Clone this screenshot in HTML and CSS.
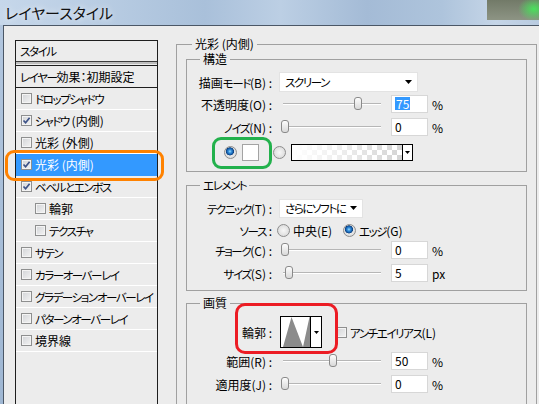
FILE: index.html
```html
<!DOCTYPE html>
<html lang="ja">
<head>
<meta charset="utf-8">
<title>レイヤースタイル</title>
<link rel="stylesheet" href="styles.css">
</head>
<body>
<div class="screen">
  <div class="titlebar"><span class="title">レイヤースタイル</span></div>
  <div class="client">
    <div class="side">
      <div class="side-head"><span class="k">スタイル</span></div>
      <div class="side-sep"></div>
      <div class="side-head2"><span class="k">レイヤー</span>効果：初期設定</div>
      <ul class="fx-list">
        <li class="fx"><span class="cb"></span><span class="k">ドロップシャドウ</span></li>
        <li class="fx"><span class="cb"><svg viewBox="0 0 9 9" width="9" height="9"><polyline points="1.5,4.5 3.6,6.8 7.6,1.8" class="tick"/></svg></span><span class="k">シャドウ</span>&nbsp;(内側)</li>
        <li class="fx"><span class="cb"></span>光彩 (外側)</li>
        <li class="fx sel"><span class="cb"><svg viewBox="0 0 9 9" width="9" height="9"><polyline points="1.5,4.5 3.6,6.8 7.6,1.8" class="tick"/></svg></span>光彩 (内側)</li>
        <li class="fx"><span class="cb"><svg viewBox="0 0 9 9" width="9" height="9"><polyline points="1.5,4.5 3.6,6.8 7.6,1.8" class="tick"/></svg></span><span class="k">ベベルとエンボス</span></li>
        <li class="fx sub"><span class="cb"></span>輪郭</li>
        <li class="fx sub"><span class="cb"></span><span class="k">テクスチャ</span></li>
        <li class="fx"><span class="cb"></span><span class="k">サテン</span></li>
        <li class="fx"><span class="cb"></span><span class="k">カラーオーバーレイ</span></li>
        <li class="fx"><span class="cb"></span><span class="k">グラデーションオーバーレイ</span></li>
        <li class="fx"><span class="cb"></span><span class="k">パターンオーバーレイ</span></li>
        <li class="fx"><span class="cb"></span>境界線</li>
      </ul>
    </div>

    <fieldset class="group outer">
      <legend>光彩 (内側)</legend>

      <fieldset class="group inner g-struct">
        <legend>構造</legend>
        <div class="row">
          <span class="lbl">描画<span class="k">モード</span>(B) :</span>
          <div class="select sel-mode"><span class="sel-text k">スクリーン</span><svg class="arrow" viewBox="0 0 7 4" width="7" height="4"><polygon points="0,0 7,0 3.5,4"/></svg></div>
        </div>
        <div class="row r2">
          <span class="lbl">不透明度(O) :</span>
          <div class="slider"><div class="track"></div><span class="thumb" style="left:73px"></span></div>
          <div class="num"><span class="hl">75</span></div>
          <span class="unit">%</span>
        </div>
        <div class="row r3">
          <span class="lbl"><span class="k">ノイズ</span>(N) :</span>
          <div class="slider"><div class="track"></div><span class="thumb" style="left:0px"></span></div>
          <div class="num">0</div>
          <span class="unit">%</span>
        </div>
        <div class="row r4">
          <span class="radio on"></span>
          <span class="swatch"></span>
          <span class="radio r-grad"></span>
          <div class="grad"><div class="grad-fill"></div><div class="grad-btn"><svg viewBox="0 0 5 3" width="5" height="3"><polygon points="0,0 5,0 2.5,3"/></svg></div></div>
        </div>
      </fieldset>

      <fieldset class="group inner g-elem">
        <legend><span class="k">エレメント</span></legend>
        <div class="row">
          <span class="lbl"><span class="k">テクニック</span>(T) :</span>
          <div class="select sel-tech"><span class="sel-text k">さらにソフトに</span><svg class="arrow" viewBox="0 0 7 4" width="7" height="4"><polygon points="0,0 7,0 3.5,4"/></svg></div>
        </div>
        <div class="row r2">
          <span class="lbl"><span class="k">ソース</span> :</span>
          <span class="radio src1"></span>
          <span class="opt">中央(E)</span>
          <span class="radio on"></span>
          <span class="opt2"><span class="k">エッジ</span>(G)</span>
        </div>
        <div class="row">
          <span class="lbl"><span class="k">チョーク</span>(C) :</span>
          <div class="slider"><div class="track"></div><span class="thumb" style="left:0px"></span></div>
          <div class="num">0</div>
          <span class="unit">%</span>
        </div>
        <div class="row r4e">
          <span class="lbl"><span class="k">サイズ</span>(S) :</span>
          <div class="slider"><div class="track"></div><span class="thumb" style="left:4px"></span></div>
          <div class="num">5</div>
          <span class="unit">px</span>
        </div>
      </fieldset>

      <fieldset class="group inner g-qual">
        <legend>画質</legend>
        <div class="row tall">
          <span class="lbl">輪郭 :</span>
          <div class="contour">
            <div class="contour-pv"><svg viewBox="0 0 29 30" width="29" height="30"><polygon points="2,30 10.5,0 22,30 28.5,0 29,0 29,30" fill="#8b8b8b"/></svg></div>
            <div class="contour-btn"><svg viewBox="0 0 5 3" width="5" height="3"><polygon points="0,0 5,0 2.5,3"/></svg></div>
          </div>
          <span class="cb cb-aa"></span>
          <span class="aa-text"><span class="k">アンチエイリアス</span>(L)</span>
        </div>
        <div class="row r2q">
          <span class="lbl">範囲(R) :</span>
          <div class="slider"><div class="track"></div><span class="thumb" style="left:48px"></span></div>
          <div class="num">50</div>
          <span class="unit">%</span>
        </div>
        <div class="row r2q">
          <span class="lbl">適用度(J) :</span>
          <div class="slider"><div class="track"></div><span class="thumb" style="left:0px"></span></div>
          <div class="num">0</div>
          <span class="unit">%</span>
        </div>
      </fieldset>
    </fieldset>
  </div>

  <div class="anno anno-orange"></div>
  <div class="anno anno-green"></div>
  <div class="anno anno-red"></div>
</div>
</body>
</html>
```

FILE: styles.css
```css
* { box-sizing: border-box; }
html, body { margin: 0; padding: 0; }
body {
  width: 539px;
  height: 404px;
  overflow: hidden;
  background: #a9bfd8;
  font-family: "Noto Sans CJK JP", sans-serif;
  font-size: 12px;
  font-feature-settings: "palt";
  color: #000;
}
.k {
  font-size: 11.5px;
  letter-spacing: -1.4px;
}
.screen {
  position: relative;
  width: 539px;
  height: 404px;
  overflow: hidden;
  background: linear-gradient(#b3c7df, #9fb7d3);
}

/* title bar */
.titlebar {
  height: 25px;
  display: flex;
  align-items: center;
  padding-left: 5px;
  background:
    radial-gradient(ellipse 16px 12px at 534px 9px, rgba(70,230,90,0.95), rgba(70,230,90,0) 100%),
    linear-gradient(#727a68, #8d9484) right top / 52px 20px no-repeat,
    linear-gradient(to right, #c6d7ea 0%, #b9cde3 18%, #a9c0da 38%, #bccfe4 52%, #a4bbd6 68%, #aec4dc 82%, #c5d5e7 92%, #b9cbe0 100%);
}
.title {
  font-size: 15px;
  line-height: 16px;
  color: #111;
  text-shadow: 0 0 6px rgba(255,255,255,0.9);
}

/* client area */
.client {
  margin-left: 3px;
  height: 379px;
  border-top: 1px solid #4b5766;
  border-left: 1px solid #4b5766;
  background: #ececec;
  display: flex;
  align-items: flex-start;
}

/* left list */
.side {
  flex: none;
  margin: 14px 0 0 11px;
  width: 143px;
  height: 400px;
  border: 1px solid #1e1e1e;
}
.side-head {
  height: 20px;
  line-height: 20px;
  padding-left: 4px;
}
.side-sep {
  height: 5px;
  background: linear-gradient(#3c3c3c 0 1px, #bdbdbd 1px 3px, #ececec 3px 4px, #1e1e1e 4px 5px);
}
.side-head2 {
  height: 22px;
  line-height: 21px;
  padding-left: 4px;
  border-bottom: 1px solid #1e1e1e;
  white-space: nowrap;
}
.fx-list {
  list-style: none;
  margin: 0;
  padding: 0;
}
.fx {
  height: 22px;
  border-bottom: 1px solid #ffffff;
  display: flex;
  align-items: center;
  padding-left: 5px;
  white-space: nowrap;
}
.fx.sub { padding-left: 19px; }
.fx.sel {
  background: #3399ff;
  color: #fff;
  border-bottom-color: #3399ff;
}

/* checkbox */
.cb {
  flex: none;
  width: 11px;
  height: 11px;
  margin-right: 3px;
  border: 1px solid #8e8f8f;
  background: linear-gradient(135deg, #d2d4d7, #f3f3f3);
  box-shadow: inset 0 0 0 1px #f4f4f4;
  display: flex;
  align-items: center;
  justify-content: center;
}
.cb svg { display: block; }
.tick {
  fill: none;
  stroke: #3d5287;
  stroke-width: 1.7;
}

/* group boxes */
fieldset.group {
  min-width: 0;
  border: 1px solid #a0a0a0;
}
fieldset.group > legend {
  padding: 0 3px;
  height: 14px;
  line-height: 14px;
  white-space: nowrap;
}
fieldset.outer {
  flex: none;
  margin: 11px 0 0 18px;
  width: 361px;
  height: 420px;
  padding: 1px 9px 0 9px;
}
fieldset.outer > legend { margin-left: 6px; }
fieldset.inner {
  margin: 0;
  width: 341px;
  padding: 6px 0 0 0;
}
fieldset.inner > legend { margin-left: 13px; }
fieldset.g-struct { padding-bottom: 9px; }
fieldset.g-elem { margin-top: 6px; padding-bottom: 7px; }
fieldset.g-qual { margin-top: 5px; height: 120px; }

/* rows */
.row {
  display: flex;
  align-items: center;
  height: 20px;
  white-space: nowrap;
}
.g-struct .r2 { margin-top: 2px; }
.g-struct .r3 { margin-top: 3px; }
.g-struct .r4 { margin-top: 5px; }
.g-elem .r2 { margin-top: 2px; }
.g-elem .r4e { margin-top: 3px; }
.row.tall { height: 32px; }
.r2q { margin-top: 3px; }

.lbl {
  flex: none;
  width: 87px;
  text-align: right;
  padding-right: 2px;
}

/* dropdown */
.select {
  flex: none;
  margin-left: 5px;
  display: flex;
  align-items: center;
  justify-content: space-between;
  background: #fff;
  border: 1px solid #e3e3e3;
  padding: 0 5px 0 5px;
}
.sel-mode { width: 139px; height: 20px; }
.sel-tech { width: 84px; height: 19px; }
.arrow { display: block; flex: none; fill: #000; }

/* slider */
.slider {
  flex: none;
  position: relative;
  width: 100px;
  height: 20px;
  margin-left: 7px;
  display: flex;
  align-items: center;
}
.track {
  margin-left: 2px;
  width: 98px;
  height: 2px;
  background: linear-gradient(#b6b6b6 0 1px, #ffffff 1px 2px);
}
.thumb {
  position: absolute;
  top: 3px;
  width: 8px;
  height: 13px;
  border: 1px solid #8a8a8a;
  border-radius: 3px;
  background: linear-gradient(#fdfdfd, #d9d9d9);
}

/* number fields */
.num {
  flex: none;
  margin-left: 10px;
  width: 37px;
  height: 18px;
  background: #fff;
  border: 1px solid #d7d7d7;
  padding-left: 3px;
  line-height: 16px;
}
.hl {
  display: inline-block;
  background: #3399ff;
  color: #fff;
  line-height: 13px;
  padding: 0 1px;
}
.unit { margin-left: 4px; }

/* radio */
.radio {
  flex: none;
  width: 13px;
  height: 13px;
  border-radius: 50%;
  border: 1px solid #8d8d8d;
  background: radial-gradient(circle at 50% 50%, #f7f7f7 0, #e2e2e2 60%, #cfcfcf 100%);
}
.radio.on {
  background:
    radial-gradient(circle at 45% 40%, #9fe0ff 0, #3a94dd 1.5px, #155fae 3px, #0c3f7c 3.8px, rgba(12,63,124,0) 4.3px),
    radial-gradient(circle at 50% 50%, #f7f7f7 0, #e2e2e2 60%, #cfcfcf 100%);
}
.g-struct .r4 .radio.on { margin-left: 37px; }
.swatch {
  flex: none;
  margin-left: 5px;
  width: 17px;
  height: 17px;
  border: 1px solid #a3a3a3;
  background: #fff;
}
.r-grad { margin-left: 14px; }
.grad {
  flex: none;
  margin-left: 5px;
  width: 122px;
  height: 17px;
  border: 1px solid #000;
  display: flex;
}
.grad-fill {
  flex: 1;
  background:
    linear-gradient(to right, #ffffff 0%, rgba(255,255,255,0.6) 45%, rgba(255,255,255,0) 100%),
    repeating-conic-gradient(#d4d4d4 0 25%, #ffffff 0 50%) 0 0 / 10px 10px;
}
.grad-btn {
  flex: none;
  width: 10px;
  border-left: 1px solid #000;
  background: #fff;
  display: flex;
  align-items: center;
  justify-content: center;
}
.grad-btn svg, .contour-btn svg { display: block; fill: #000; }

.src1 { margin-left: 3px; }
.opt { flex: none; width: 53px; padding-left: 3px; }
.opt2 { padding-left: 3px; }

/* contour */
.contour {
  flex: none;
  margin-left: 6px;
  width: 42px;
  height: 32px;
  border: 1px solid #000;
  display: flex;
  background: #fff;
}
.contour-pv { width: 29px; height: 30px; }
.contour-pv svg { display: block; }
.contour-btn {
  flex: none;
  width: 11px;
  border-left: 1px solid #000;
  display: flex;
  align-items: center;
  justify-content: center;
}
.cb-aa { margin-left: 14px; }

/* annotations */
.anno {
  position: absolute;
  border-style: solid;
  border-width: 3px;
  background: transparent;
}
.anno-orange {
  left: 5px; top: 150px; width: 159px; height: 31px;
  border-color: #ff8200;
  border-radius: 9px;
}
.anno-green {
  left: 212px; top: 137px; width: 60px; height: 32px;
  border-color: #22b14c;
  border-radius: 9px;
}
.anno-red {
  left: 235px; top: 303px; width: 103px; height: 51px;
  border-color: #ec1c24;
  border-radius: 10px;
}
```
